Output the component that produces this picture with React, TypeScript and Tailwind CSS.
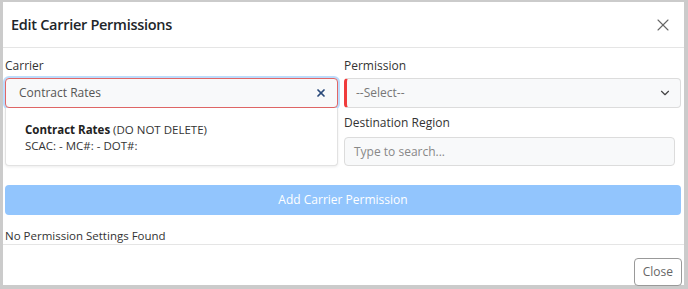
import { ChevronDown, X } from "lucide-react";

const font = { fontFamily: '"Open Sans", "Noto Sans", sans-serif' };

export default function App() {
  return (
    <div
      className="w-[688px] h-[289px] flex flex-col bg-white border-l-[3px] border-t-[2px] border-r-[4px] border-b-[4px] border-[#cbcbcb] text-[#333]"
      style={font}
    >
      {/* header */}
      <div className="h-[46px] shrink-0 flex items-center justify-between pl-[8px] pr-[11px] border-b border-[#e5e5e5]">
        <h1 className="text-[14.5px] font-semibold text-[#212529] tracking-[-0.02em]">Edit Carrier Permissions</h1>
        <X className="w-[20px] h-[20px] text-[#666]" strokeWidth={1.3} />
      </div>

      {/* body */}
      <div className="flex-1 flex flex-col pl-[2px] pr-[3px] pt-[6px]">
        <div className="flex gap-[6px]">
          <div className="w-[333px] flex flex-col">
            <label className="text-[12px] leading-[18px] h-[24px] pt-[3px]">Carrier</label>
            <div className="h-[30px] rounded-[4px] border border-[#e06666] bg-[#f8f9fa] flex items-center pl-[13px] pr-[10px] ring-2 ring-[#bcdcfc]">
              <span className="flex-1 text-[12px] text-[#555]">Contract Rates</span>
              <X className="w-[12px] h-[12px] text-[#2a4a7a]" strokeWidth={3.5} />
            </div>
            <div className="h-[58px] rounded-b-[4px] border border-[#e2e2e2] border-t-0 bg-white shadow-[0_1px_3px_rgba(0,0,0,0.08)] pl-[19px] pt-[14px] text-[11.5px] leading-[16px] text-[#333]">
              <div>
                <span className="font-bold text-[#222]">Contract Rates</span> (DO NOT DELETE)
              </div>
              <div>SCAC: - MC#: - DOT#:</div>
            </div>
          </div>

          <div className="flex-1 flex flex-col">
            <label className="text-[12px] leading-[18px] h-[24px] pt-[3px]">Permission</label>
            <div className="h-[30px] rounded-[4px] border border-[#dcdcdc] border-l-[3px] border-l-[#f03c3c] bg-[#f8f9fa] flex items-center pl-[9px] pr-[8px]">
              <span className="flex-1 text-[12px] text-[#777]">--Select--</span>
              <ChevronDown className="w-[14px] h-[14px] text-[#444]" strokeWidth={2} />
            </div>
            <label className="text-[12px] leading-[18px] h-[29px] pt-[6px]">Destination Region</label>
            <div className="w-[331px] h-[29px] rounded-[4px] border border-[#dcdcdc] bg-[#f8f9fa] flex items-center pl-[9px]">
              <span className="text-[12px] text-[#888]">Type to search...</span>
            </div>
          </div>
        </div>

        <button className="mt-[19px] h-[30px] w-full rounded-[4px] bg-[#92c5fd] text-white text-[12px]">
          Add Carrier Permission
        </button>

        <div className="mt-[13px] text-[11.5px] leading-[16px] text-[#333]">No Permission Settings Found</div>
      </div>

      {/* footer */}
      <div className="h-[42px] shrink-0 border-t border-[#e5e5e5] flex items-end justify-end pr-[2px]">
        <button className="h-[28px] px-[8px] rounded-[4px] border border-[#999] text-[12px] text-[#666] bg-white">
          Close
        </button>
      </div>
    </div>
  );
}
